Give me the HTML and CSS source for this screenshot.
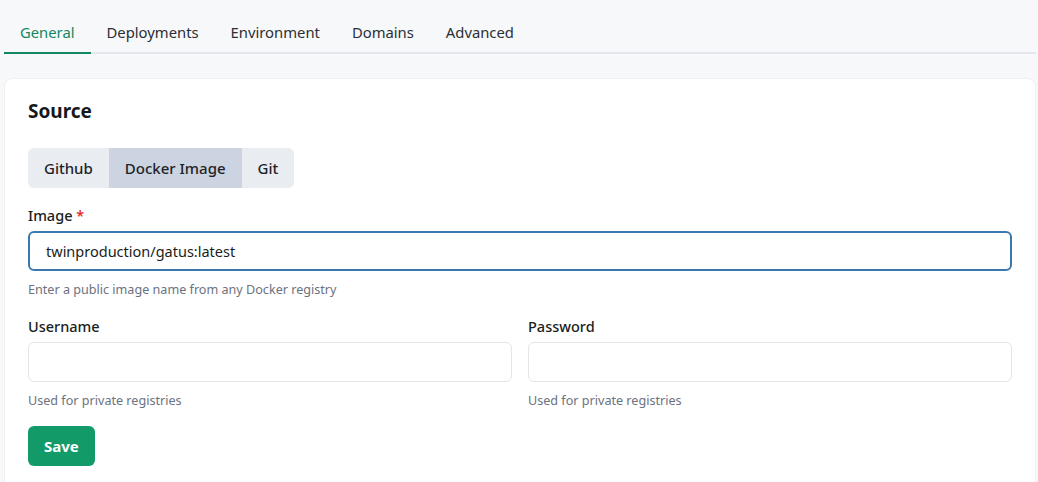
FILE: index.html
```html
<!DOCTYPE html>
<html>
<head>
<meta charset="utf-8">
<link rel="stylesheet" href="styles.css">
</head>
<body>
<div class="page">
  <nav class="tabs">
    <a class="tab active">General</a>
    <a class="tab">Deployments</a>
    <a class="tab">Environment</a>
    <a class="tab">Domains</a>
    <a class="tab">Advanced</a>
  </nav>
  <section class="card">
    <h2 class="title">Source</h2>
    <div class="segmented">
      <button class="seg">Github</button>
      <button class="seg active">Docker Image</button>
      <button class="seg">Git</button>
    </div>
    <div class="field">
      <label class="label">Image <span class="req">*</span></label>
      <div class="input focus">twinproduction/gatus:latest</div>
      <p class="help">Enter a public image name from any Docker registry</p>
    </div>
    <div class="row">
      <div class="field">
        <label class="label">Username</label>
        <div class="input"></div>
        <p class="help">Used for private registries</p>
      </div>
      <div class="field">
        <label class="label">Password</label>
        <div class="input"></div>
        <p class="help">Used for private registries</p>
      </div>
    </div>
    <button class="save">Save</button>
  </section>
</div>
</body>
</html>
```

FILE: styles.css
```css
* { box-sizing: border-box; }
html, body { margin: 0; padding: 0; }
body {
  background: #f7f8fa;
  font-family: "Noto Sans", "Open Sans", sans-serif;
  color: #1f2328;
  height: 482px;
  overflow: hidden;
}
.page {
  padding: 12px 2px 0 4px;
}
.tabs {
  display: flex;
  border-bottom: 2px solid #e3e6ec;
  height: 42px;
}
.tab {
  padding: 8px 16px 0;
  font-size: 14.8px;
  line-height: 24px;
  color: #2a2f36;
  margin-bottom: -2px;
  border-bottom: 2px solid transparent;
}
.tab.active {
  color: #13875f;
  border-bottom-color: #13875f;
}
.card {
  margin-top: 24px;
  background: #fff;
  border-radius: 8px;
  border: 1px solid #eef0f3;
  padding: 19px 23px 30px;
}
.title {
  margin: 0;
  font-size: 19px;
  font-weight: 700;
  line-height: 26px;
  color: #16191d;
}
.segmented {
  display: inline-flex;
  margin-top: 24px;
  background: #e9edf2;
  border-radius: 6px;
  overflow: hidden;
}
.seg {
  border: 0;
  background: transparent;
  font-family: inherit;
  font-size: 15px;
  font-weight: 500;
  color: #1f2328;
  height: 40px;
  padding: 0 16px;
}
.seg.active { background: #cbd4e0; }
.field { margin-top: 17px; flex: 1; }
.label {
  display: block;
  font-size: 14.5px;
  font-weight: 500;
  line-height: 20px;
  color: #1a1d21;
  margin-bottom: 6px;
}
.req { color: #dc2626; }
.input {
  height: 40px;
  border: 1px solid #e1e5ea;
  border-radius: 6px;
  padding: 0 16px;
  font-size: 14.5px;
  line-height: 38px;
  color: #1a1d21;
}
.input.focus {
  border: 2px solid #3b78ad;
  line-height: 36px;
}
.help {
  margin: 10px 0 0;
  font-size: 12.6px;
  line-height: 18px;
  color: #6b7280;
}
.row { display: flex; gap: 16px; margin-top: 0; }
.save {
  margin-top: 16px;
  height: 40px;
  padding: 0 16px;
  border: 0;
  border-radius: 6px;
  background: #129a68;
  color: #fff;
  font-family: inherit;
  font-size: 15px;
  font-weight: 700;
}
```
